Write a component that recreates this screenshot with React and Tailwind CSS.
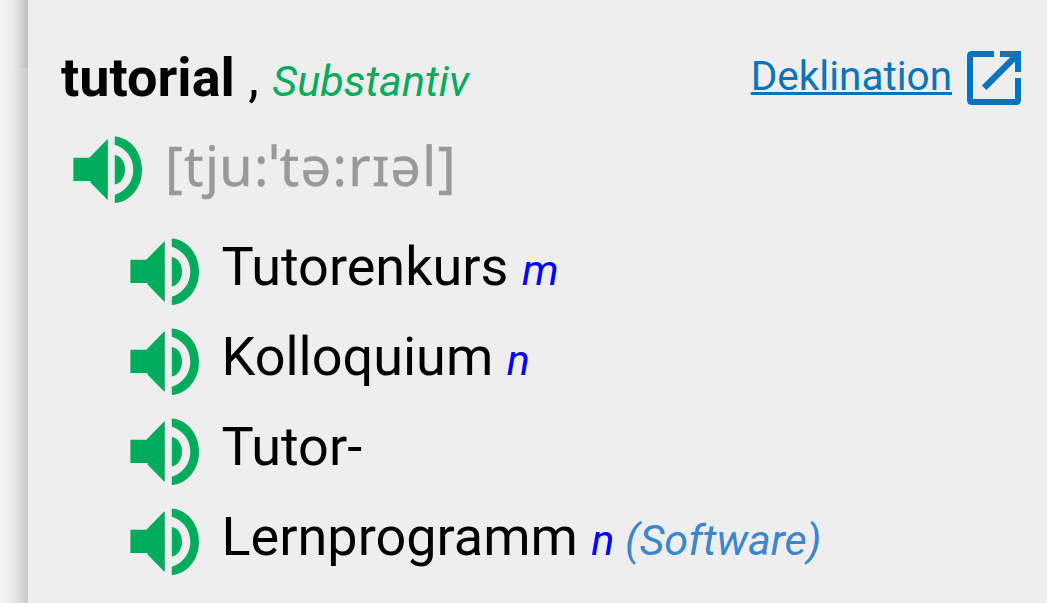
import React from 'react';

const translations = [
  { word: 'Tutorenkurs', gender: 'm' },
  { word: 'Kolloquium', gender: 'n' },
  { word: 'Tutor-' },
  { word: 'Lernprogramm', gender: 'n', note: '(Software)' },
];

function SpeakerIcon() {
  return (
    <svg width="70" height="68" viewBox="0 0 70 68" fill="#00ab5c" className="shrink-0">
      <path d="M0.4 21.8H16.3L34.2 3.4Q34.8 3 34.8 3.8V63.2Q34.8 64 34.2 63.6L17.5 46.6V45H0.4Z" />
      <path d="M41.8 18.9C47.5 19.6 52 25.5 52 33.5C52 41.5 47.5 47.6 41.8 48.6Z" />
      <path d="M41.8 0.5C57 1.5 69 15.5 69 33.7C69 51.9 57 66 41.8 67V58.7C52.5 55.3 60.3 46 60.3 33.7C60.3 21.4 52.5 12.2 41.8 8.8Z" />
    </svg>
  );
}

function OpenIcon() {
  return (
    <svg width="54" height="54" viewBox="0 0 54 54" fill="#0874bb" className="shrink-0">
      <path d="M27 0V6H6V48H48V27H54V49Q54 54 49 54H5Q0 54 0 49V5Q0 0 5 0Z" />
      <path d="M33 0H54V21H48V10.6L19.5 39.1L14.9 34.5L43.4 6H33Z" />
    </svg>
  );
}

export default function App() {
  return (
    <div className="flex h-[603px] w-[1047px] overflow-hidden bg-[#eeeeee] font-['Roboto',sans-serif] text-[54px] leading-[90px] text-black">
      {/* Page edge shadow, a little deeper at the top */}
      <div className="flex w-7 shrink-0 flex-col">
        <div className="h-[68px] bg-linear-to-r from-[#f7f7f7] via-[#e8e8e8] to-[#bebebe]" />
        <div className="flex-1 bg-linear-to-r from-[#f7f7f7] via-[#e8e8e8] to-[#c8c8c8]" />
      </div>

      <main className="min-w-0 flex-1 pt-8">
        <header className="flex h-[90px] items-start justify-between pr-[26px] pl-[33px]">
          <h1 className="pt-px whitespace-nowrap">
            <span className="font-bold">tutorial</span>
            {' , '}
            <em className="text-[43.2px] text-[#00ab5c]">Substantiv</em>
          </h1>
          <a href="#deklination" className="flex items-start text-[40.5px] text-[#0874bb]">
            <span className="-mt-px underline decoration-3">Deklination</span>
            <span className="mt-[19px] ml-[15px]">
              <OpenIcon />
            </span>
          </a>
        </header>

        <div className="flex h-[100px] pl-[45px]">
          <div className="pt-[14px]">
            <SpeakerIcon />
          </div>
          <span className="-mt-[2px] ml-[22px] font-['Noto_Sans',sans-serif] tracking-[1.35px] text-[#999999] [-webkit-text-stroke:0.4px_#999999]">
            [tj<span className="-ml-px">u</span>:ˈtə:rɪəl]
          </span>
        </div>

        <ul>
          {translations.map((item) => (
            <li key={item.word} className="flex h-[90px] pl-[102px]">
              <div className="pt-[16px]">
                <SpeakerIcon />
              </div>
              <p className="ml-[21.5px] whitespace-nowrap">
                {item.word}{' '}
                {item.gender && <em className="text-[43.2px] text-[#0000ff]">{item.gender}</em>}
                {item.note && <em className="text-[43.2px] text-[#3a86cf]"> {item.note}</em>}
              </p>
            </li>
          ))}
        </ul>
      </main>
    </div>
  );
}
